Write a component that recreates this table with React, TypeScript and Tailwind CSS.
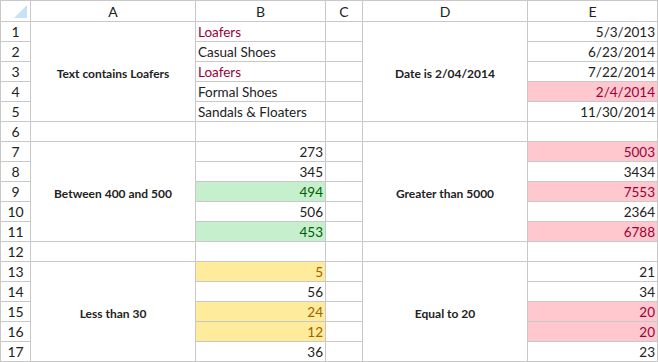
import React from "react";

type Cell = { t?: string; align?: "l" | "r"; fill?: "red" | "green" | "yellow"; color?: "red" | "green" | "yellow" };

const rows: { b: Cell; e: Cell }[] = [
  { b: { t: "Loafers", align: "l", color: "red" }, e: { t: "5/3/2013", align: "r" } },
  { b: { t: "Casual Shoes", align: "l" }, e: { t: "6/23/2014", align: "r" } },
  { b: { t: "Loafers", align: "l", color: "red" }, e: { t: "7/22/2014", align: "r" } },
  { b: { t: "Formal Shoes", align: "l" }, e: { t: "2/4/2014", align: "r", fill: "red", color: "red" } },
  { b: { t: "Sandals & Floaters", align: "l" }, e: { t: "11/30/2014", align: "r" } },
  { b: {}, e: {} },
  { b: { t: "273", align: "r" }, e: { t: "5003", align: "r", fill: "red", color: "red" } },
  { b: { t: "345", align: "r" }, e: { t: "3434", align: "r" } },
  { b: { t: "494", align: "r", fill: "green", color: "green" }, e: { t: "7553", align: "r", fill: "red", color: "red" } },
  { b: { t: "506", align: "r" }, e: { t: "2364", align: "r" } },
  { b: { t: "453", align: "r", fill: "green", color: "green" }, e: { t: "6788", align: "r", fill: "red", color: "red" } },
  { b: {}, e: {} },
  { b: { t: "5", align: "r", fill: "yellow", color: "yellow" }, e: { t: "21", align: "r" } },
  { b: { t: "56", align: "r" }, e: { t: "34", align: "r" } },
  { b: { t: "24", align: "r", fill: "yellow", color: "yellow" }, e: { t: "20", align: "r", fill: "red", color: "red" } },
  { b: { t: "12", align: "r", fill: "yellow", color: "yellow" }, e: { t: "20", align: "r", fill: "red", color: "red" } },
  { b: { t: "36", align: "r" }, e: { t: "23", align: "r" } },
];

const rowStart = [
  "row-start-2",
  "row-start-3",
  "row-start-4",
  "row-start-5",
  "row-start-6",
  "row-start-7",
  "row-start-8",
  "row-start-9",
  "row-start-10",
  "row-start-11",
  "row-start-12",
  "row-start-13",
  "row-start-14",
  "row-start-15",
  "row-start-16",
  "row-start-17",
  "row-start-18",
];

function fillCls(c: Cell) {
  if (c.fill === "red") return "bg-[#ffc7ce]";
  if (c.fill === "green") return "bg-[#c6efce]";
  if (c.fill === "yellow") return "bg-[#ffeb9c]";
  return "bg-white";
}
function colorCls(c: Cell) {
  if (c.color === "red") return "text-[#9c0038]";
  if (c.color === "green") return "text-[#006100]";
  if (c.color === "yellow") return "text-[#9c6500]";
  return "text-[#222]";
}

function DataCell({ c, col, row }: { c: Cell; col: string; row: string }) {
  return (
    <div
      className={`${col} ${row} ${fillCls(c)} ${colorCls(c)} flex items-end pb-[1px] leading-[16px] whitespace-nowrap overflow-hidden ${
        c.align === "r" ? "justify-end pr-[2px]" : "justify-start pl-[2px]"
      }`}
    >
      {c.t}
    </div>
  );
}

const labels: { col: string; row: string; text: string }[] = [
  { col: "col-start-2", row: "row-start-2", text: "Text contains Loafers" },
  { col: "col-start-2", row: "row-start-8", text: "Between 400 and 500" },
  { col: "col-start-2", row: "row-start-14", text: "Less than 30" },
  { col: "col-start-5", row: "row-start-2", text: "Date is 2/04/2014" },
  { col: "col-start-5", row: "row-start-8", text: "Greater than 5000" },
  { col: "col-start-5", row: "row-start-14", text: "Equal to 20" },
];

export default function App() {
  return (
    <div className="w-[658px] h-[362px] bg-white font-[Lato,sans-serif]">
      <div className="grid grid-cols-[29px_164px_129px_36px_164px_129px] grid-rows-[20px_repeat(17,19px)] gap-px p-px bg-[#c8c8c8] text-[13.5px] text-[#222]">
        <div className="bg-white relative col-start-1 row-start-1">
          <svg width="29" height="20" className="absolute left-0 top-0">
            <polygon points="13,17 26,4 26,17" fill="#c5e2f7" />
          </svg>
        </div>
        {["A", "B", "C", "D", "E"].map((h) => (
          <div key={h} className="bg-white flex items-center justify-center leading-none row-start-1 pt-[1px] text-[14px]">
            {h}
          </div>
        ))}
        {labels.map((l) => (
          <div
            key={l.col + l.row}
            className={`bg-white ${l.col} ${l.row} row-span-5 flex items-center justify-center font-bold text-[12px] text-[#222] pt-[4px]`}
          >
            {l.text}
          </div>
        ))}
        {rows.map((r, i) => {
          const n = i + 1;
          const rs = rowStart[i];
          const merged = !(n === 6 || n === 12);
          return (
            <React.Fragment key={n}>
              <div className={`bg-white col-start-1 ${rs} flex items-center justify-center leading-none pt-[1px] text-[14px]`}>
                {n}
              </div>
              {!merged && <div className={`bg-white col-start-2 ${rs}`} />}
              <DataCell c={r.b} col="col-start-3" row={rs} />
              <div className={`bg-white col-start-4 ${rs}`} />
              {!merged && <div className={`bg-white col-start-5 ${rs}`} />}
              <DataCell c={r.e} col="col-start-6" row={rs} />
            </React.Fragment>
          );
        })}
      </div>
    </div>
  );
}
